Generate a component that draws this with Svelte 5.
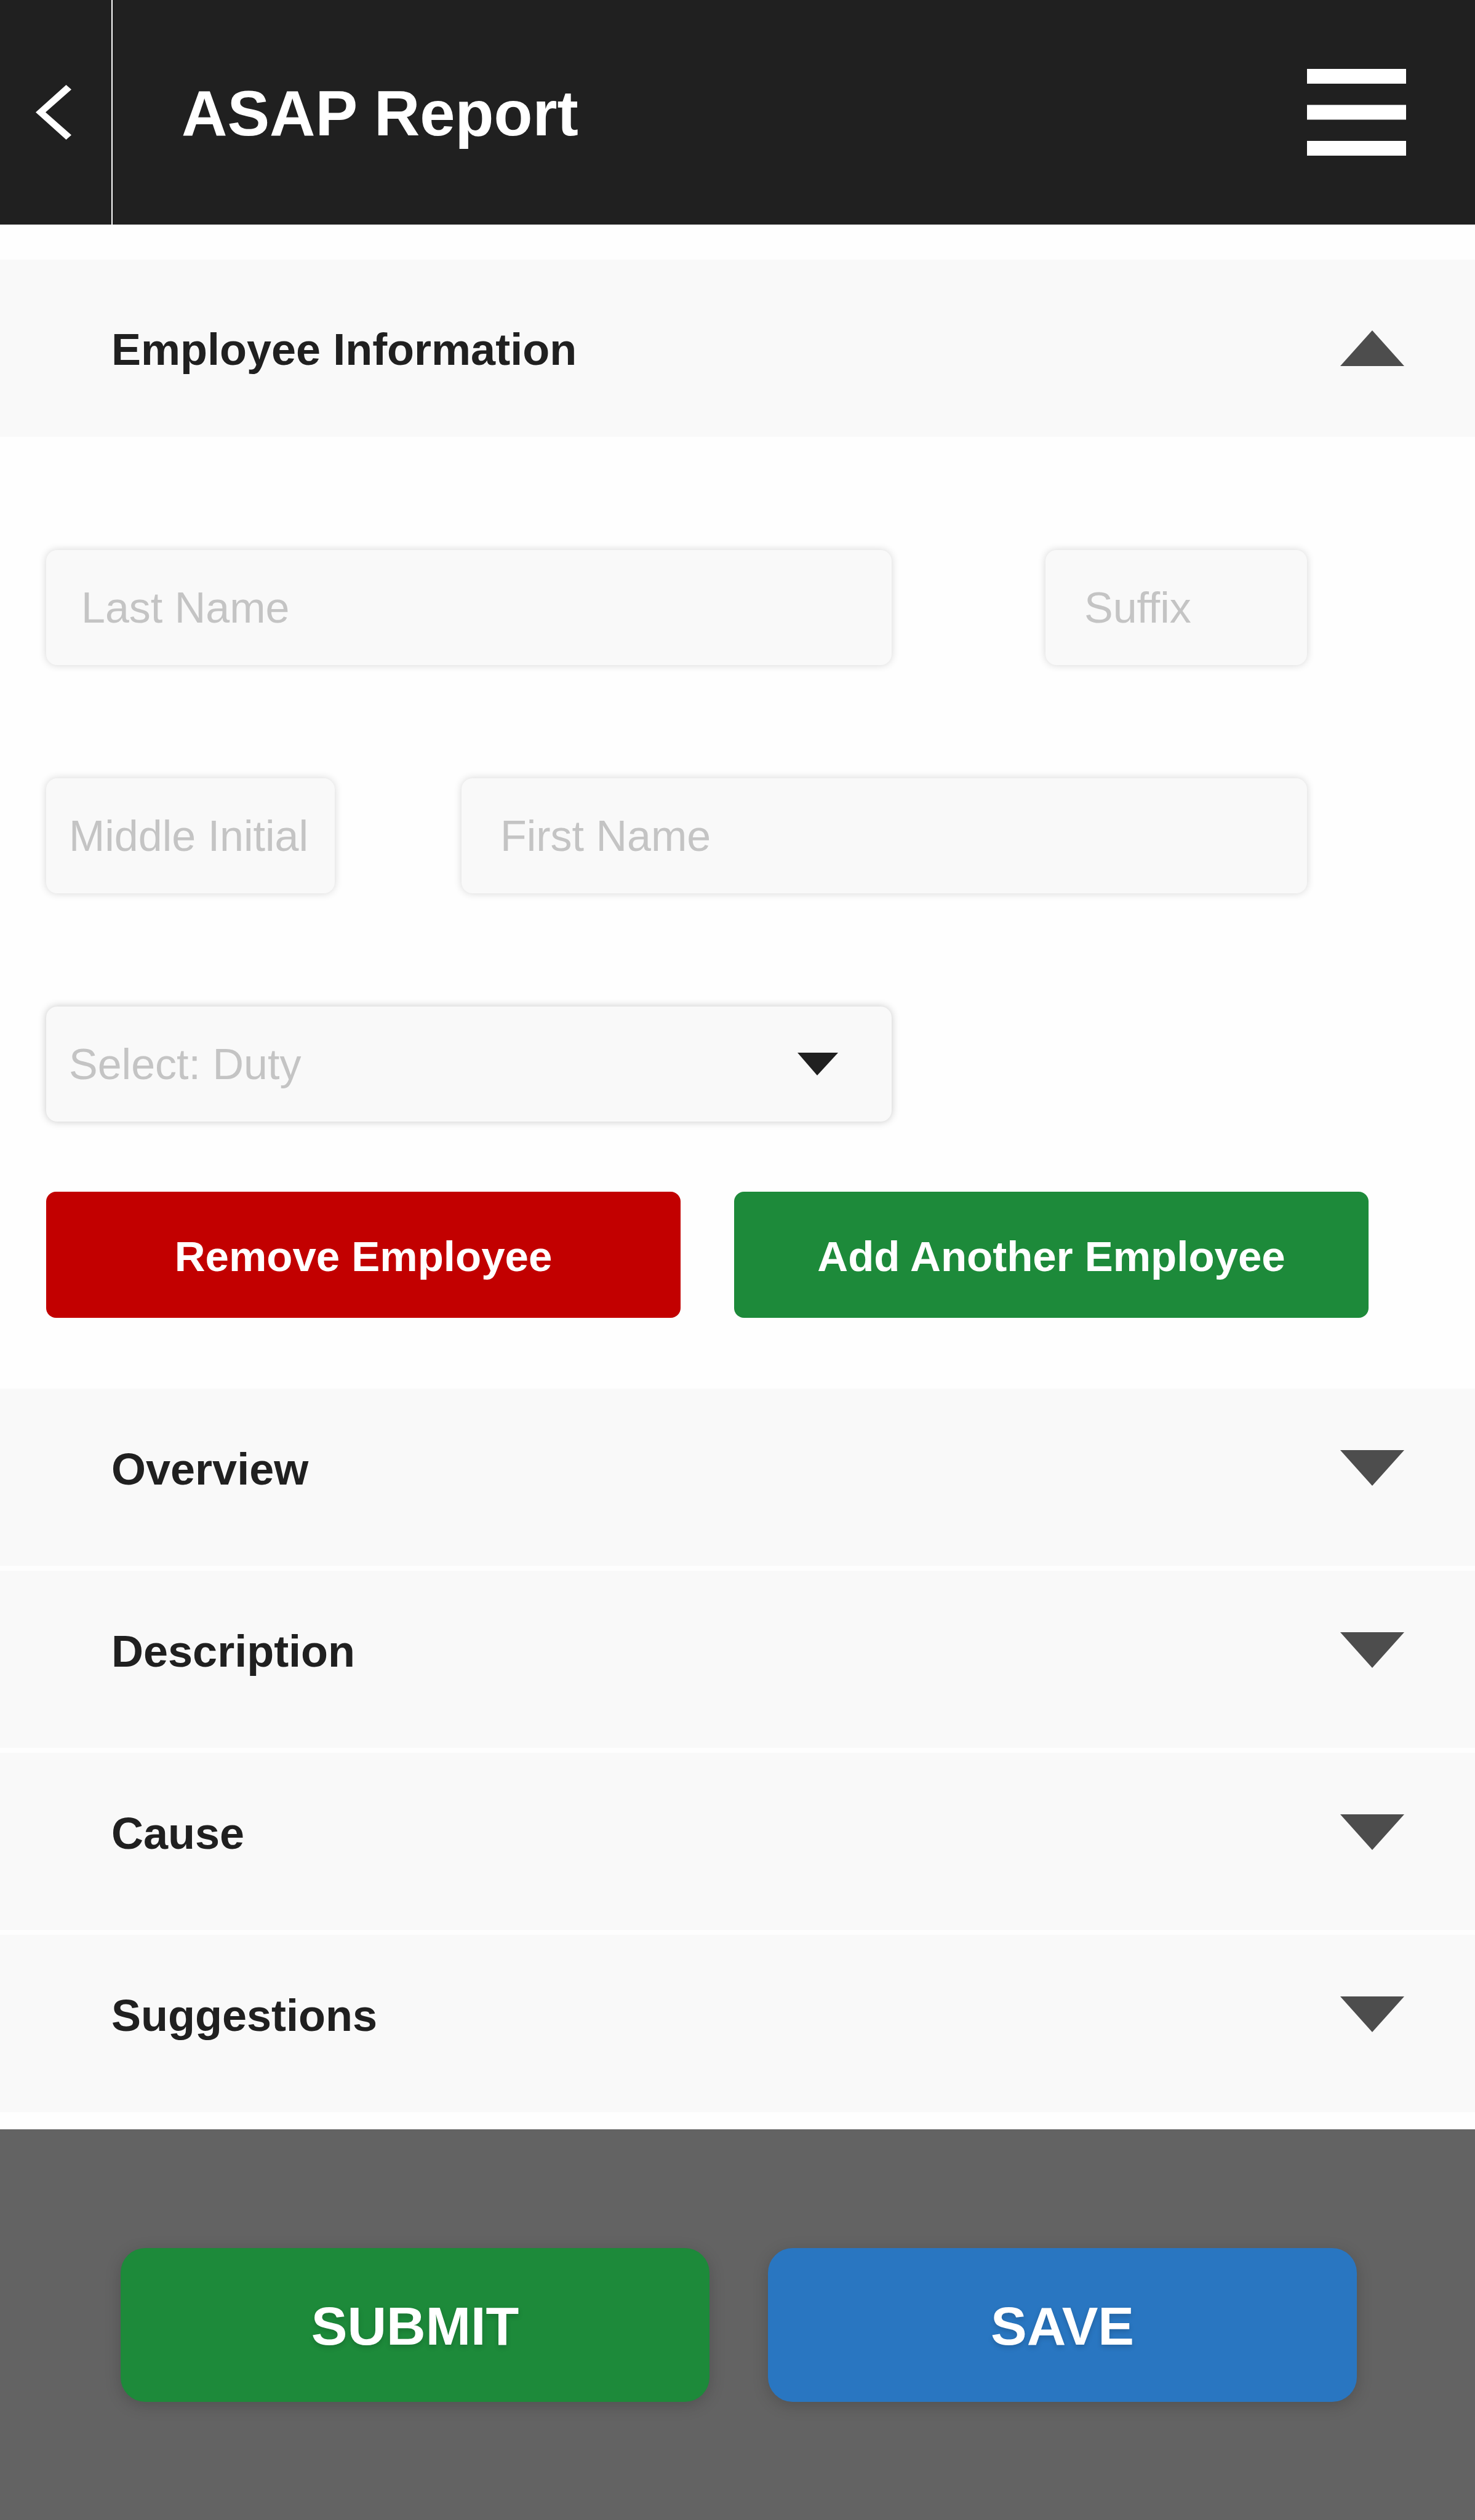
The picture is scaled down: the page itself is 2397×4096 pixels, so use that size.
<script lang="ts">
  let lastName = $state('');
  let suffix = $state('');
  let middleInitial = $state('');
  let firstName = $state('');
  let duty = $state('');
  let open = $state(true);

  const sections = ['Overview', 'Description', 'Cause', 'Suggestions'];
</script>

<div class="page">
  <header class="topbar">
    <button class="back" type="button" aria-label="Back">
      <svg class="chevron" viewBox="0 0 58 89" aria-hidden="true">
        <path d="M0 44.5 49.5 0 58 7.5 16 44.5 58 81.5 49.5 89Z" fill="#fff" />
      </svg>
    </button>
    <h1>ASAP Report</h1>
    <button class="menu" type="button" aria-label="Menu">
      <svg viewBox="0 0 161 141" aria-hidden="true">
        <path d="M0 0H161V24H0ZM0 58.5H161V82.5H0ZM0 117H161V141H0Z" fill="#fff" />
      </svg>
    </button>
  </header>

  <main>
    <h2>
      <button class="section first" type="button" aria-expanded={open} onclick={() => (open = !open)}>
        <span>Employee Information</span>
        <svg class="arrow" viewBox="0 0 104 58" aria-hidden="true"><path d="M0 58 52 0 104 58Z" /></svg>
      </button>
    </h2>

    {#if open}
      <form class="employee">
        <div class="row wide-first">
          <input class="field" type="text" placeholder="Last Name" aria-label="Last Name" bind:value={lastName} />
          <input class="field inset" type="text" placeholder="Suffix" aria-label="Suffix" bind:value={suffix} />
        </div>
        <div class="row wide-last">
          <input class="field tight" type="text" placeholder="Middle Initial" aria-label="Middle Initial" bind:value={middleInitial} />
          <input class="field inset" type="text" placeholder="First Name" aria-label="First Name" bind:value={firstName} />
        </div>
        <div class="row wide-first">
          <div class="picker">
            <select class="field tight" aria-label="Duty" bind:value={duty}>
              <option value="">Select: Duty</option>
            </select>
            <svg class="caret" viewBox="0 0 66 37" aria-hidden="true"><path d="M0 0H66L32 37Z" fill="#202020" /></svg>
          </div>
        </div>
        <div class="actions">
          <button class="action remove" type="button">Remove Employee</button>
          <button class="action add" type="button">Add Another Employee</button>
        </div>
      </form>
    {/if}

    <div class="sections">
      {#each sections as name}
        <h2>
          <button class="section" type="button" aria-expanded="false">
            <span>{name}</span>
            <svg class="arrow" viewBox="0 0 104 58" aria-hidden="true"><path d="M0 0H104L52 58Z" /></svg>
          </button>
        </h2>
      {/each}
    </div>
  </main>

  <footer>
    <button class="final submit" type="submit">SUBMIT</button>
    <button class="final save" type="button">SAVE</button>
  </footer>
</div>

<style>
  :global(body) {
    background: #fefefe;
  }
  .page {
    display: flex;
    flex-direction: column;
    min-height: 100vh;
    font-family: 'Liberation Sans', Arial, Helvetica, sans-serif;
    color: #202020;
  }
  .page * {
    box-sizing: border-box;
  }
  button,
  input,
  select {
    margin: 0;
    border: 0;
    font-family: inherit;
    cursor: pointer;
  }
  h1,
  h2 {
    margin: 0;
  }
  svg {
    display: block;
  }

  .topbar {
    display: flex;
    align-items: center;
    height: 365px;
    padding-right: 112px;
    background: #202020;
  }
  .back {
    align-self: stretch;
    width: 183px;
    padding: 0 0 0 58px;
    border-right: 2px solid #fff;
    background: none;
  }
  .chevron {
    width: 58px;
    height: 89px;
  }
  h1 {
    flex: 1;
    padding: 4px 0 0 112px;
    font-size: 103px;
    line-height: 120px;
    color: #fff;
  }
  .menu {
    width: 161px;
    padding: 0;
    background: none;
  }

  main {
    padding: 57px 0 28px;
  }
  .section {
    display: flex;
    align-items: center;
    justify-content: space-between;
    width: 100%;
    height: 288px;
    padding: 0 115px 30px 181px;
    background: #f9f9f9;
    color: #202020;
    font-size: 72px;
    font-weight: 700;
    line-height: 80px;
    text-align: left;
  }
  .section span {
    padding-top: 4px;
  }
  .section.first {
    padding-bottom: 0;
  }
  .arrow {
    width: 104px;
    height: 58px;
    fill: #4d4d4d;
  }
  .sections {
    display: grid;
    gap: 8px;
  }

  .employee {
    display: grid;
    padding: 184px 173px 115px 75px;
  }
  .row {
    display: grid;
    margin: 0 100px 184px 0;
  }
  .row:nth-child(3) {
    margin-bottom: 114px;
  }
  .wide-first {
    grid-template-columns: 1374fr 425fr;
    column-gap: 250px;
  }
  .wide-last {
    grid-template-columns: 469fr 1374fr;
    column-gap: 206px;
  }
  .field {
    width: 100%;
    min-width: 0;
    height: 187px;
    padding: 0 0 0 57px;
    border-radius: 18px;
    background: #f9f9f9;
    box-shadow: 0 0 13px rgba(0, 0, 0, 0.16);
    color: #c4c4c4;
    font-size: 70px;
    appearance: none;
  }
  .field.inset {
    padding-left: 63px;
  }
  .field.tight {
    padding-left: 37px;
  }
  .field::placeholder {
    color: #c4c4c4;
    opacity: 1;
  }
  .picker {
    display: grid;
    align-items: center;
  }
  .picker > * {
    grid-area: 1 / 1;
  }
  .picker .field {
    box-shadow: 0 0 13px rgba(0, 0, 0, 0.22);
  }
  .caret {
    justify-self: end;
    width: 66px;
    height: 37px;
    margin-right: 87px;
    pointer-events: none;
  }

  .actions {
    display: grid;
    grid-template-columns: 1fr 1fr;
    gap: 87px;
  }
  .action {
    height: 205px;
    padding: 6px 0 0;
    border-radius: 16px;
    color: #fff;
    font-size: 69px;
    font-weight: 700;
  }
  .remove {
    background: #c20000;
  }
  .add,
  .submit {
    background: #1d8a3a;
  }

  footer {
    display: grid;
    flex: 1;
    grid-template-columns: 1fr 1fr;
    align-items: start;
    gap: 95px;
    padding: 193px 192px 193px 196px;
    background: #636363;
  }
  .final {
    height: 250px;
    padding: 4px 0 0;
    border-radius: 40px;
    box-shadow: 0 6px 26px rgba(0, 0, 0, 0.18);
    color: #fff;
    font-size: 88px;
    font-weight: 700;
    text-shadow: 0 4px 9px rgba(0, 0, 0, 0.16);
  }
  .save {
    background: #2976c1;
  }
</style>
